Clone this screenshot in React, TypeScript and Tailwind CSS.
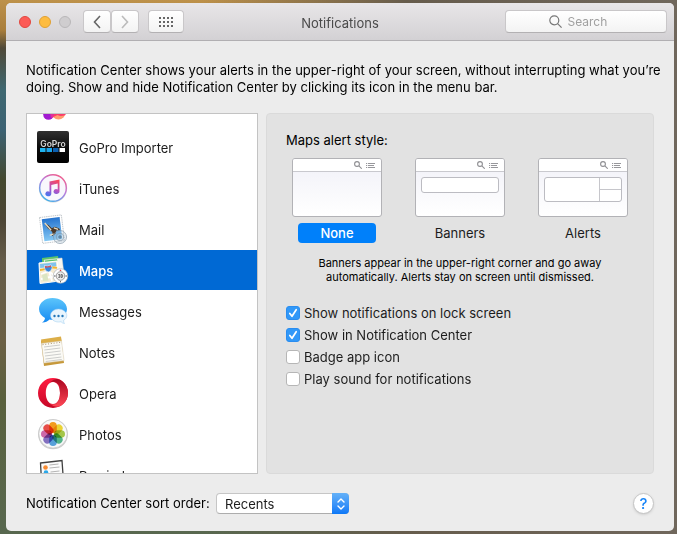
import { useState } from "react";
import type { ReactNode } from "react";

type AlertStyle = "None" | "Banners" | "Alerts";

function GameCenterIcon() {
  return (
    <svg viewBox="0 0 32 32" className="size-8 shrink-0" aria-hidden="true">
      <circle cx="11.500" cy="24.500" r="5.300" fill="#a21bd0" />
      <circle cx="21.500" cy="22.500" r="7" fill="#ff9d6e" />
      <path d="M14 17h14.500v8q-5 2-8 0l-5 2.500z" fill="#fb3d6b" />
      <path d="M13 18h4v7q-1 2-3 3-1-4-1-9" fill="#e0309a" />
    </svg>
  );
}

function GoProIcon() {
  return (
    <svg viewBox="0 0 32 32" className="size-8 shrink-0" aria-hidden="true">
      <defs>
        <linearGradient id="gp" x1="0" y1="0" x2="0" y2="1">
          <stop offset="0" stopColor="#303030" />
          <stop offset=".5" stopColor="#0d0d0d" />
          <stop offset="1" stopColor="#000" />
        </linearGradient>
      </defs>
      <rect width="32" height="32" rx="2" fill="url(#gp)" />
      <text x="16" y="16" fontSize="8.500" fontWeight="600" textAnchor="middle" fill="#d8d8d8" fontFamily="Inter, sans-serif">GoPro</text>
      <path d="M3 17h5.500v4H3z" fill="#1fb4f0" />
      <path d="M9.500 17H15v4H9.500z" fill="#1ba4ea" />
      <path d="M16 17h5.500v4H16z" fill="#0b5fb0" />
      <path d="M22.500 17H28v4h-5.500z" fill="#fff" />
    </svg>
  );
}

function ITunesIcon() {
  return (
    <svg viewBox="0 0 32 32" className="size-8 shrink-0" aria-hidden="true">
      <defs>
        <linearGradient id="itr" x1=".8" y1="0" x2=".2" y2="1">
          <stop offset="0" stopColor="#f75c86" />
          <stop offset=".45" stopColor="#b77be0" />
          <stop offset="1" stopColor="#35b5ea" />
        </linearGradient>
        <linearGradient id="itn" x1=".7" y1="0" x2=".3" y2="1">
          <stop offset="0" stopColor="#f9485c" />
          <stop offset=".55" stopColor="#b452c5" />
          <stop offset="1" stopColor="#4a75ee" />
        </linearGradient>
      </defs>
      <circle cx="16" cy="16.500" r="14.200" fill="#000" opacity=".12" />
      <circle cx="16" cy="16" r="13.300" fill="#f8f7fc" stroke="url(#itr)" strokeWidth="1.400" />
      <path d="M12.500 9.500 22.500 7.500V19.500a3 2.400 0 1 1-1.800-2.100V11.600l-6.400 1.300v8.900a3 2.400 0 1 1-1.800-2.100z" fill="url(#itn)" />
    </svg>
  );
}

function MailIcon() {
  return (
    <svg viewBox="0 0 32 32" className="size-8 shrink-0" aria-hidden="true">
      <defs>
        <linearGradient id="ml" x1="0" y1="0" x2="0" y2="1">
          <stop offset="0" stopColor="#2674ce" />
          <stop offset="1" stopColor="#83c8f5" />
        </linearGradient>
      </defs>
      <g transform="rotate(-7 16 16)">
        <rect x="4" y="3" width="22" height="26" fill="#fff" stroke="#b8bdc2" strokeWidth=".8" strokeDasharray="1.500 .7" />
        <rect x="6" y="5" width="18" height="22" fill="url(#ml)" />
        <path d="M8 9l4 2.500 3 3.500 3-1 4 2 1 2-4 0-1 3-4 2 1-4-4-4z" fill="#4b3928" />
        <path d="M8.500 9l3.500 5 2 3M17 15l4 2M12 22l4-1" stroke="#e9dcc2" strokeWidth="1.300" fill="none" />
      </g>
      <g fill="#a9c3d8" fillOpacity=".3" stroke="#8195a6" strokeWidth=".8" opacity=".85">
        <circle cx="23" cy="24" r="6.500" />
        <circle cx="23" cy="24" r="3.800" />
        <path d="M21 24h4M23 22v4" stroke="#3f566b" />
      </g>
    </svg>
  );
}

function MapsIcon() {
  return (
    <svg viewBox="0 0 32 32" className="size-8 shrink-0" aria-hidden="true">
      <path d="M5 4l16-2 1 8-17 2z" fill="#5cc46b" />
      <path d="M7 6l18-2 2.500 20-18 2z" fill="#f8f6ef" stroke="#dcd8cd" strokeWidth=".5" />
      <path d="M8 6.500l12-1.300.3 2.200L8 9z" fill="#5cc46b" />
      <path d="M2 9l18-2 2.500 20L3 29.500z" fill="#f4ebd3" stroke="#fff" strokeWidth="1" />
      <path d="M3 10l16-1.700.3 4L3.200 14z" fill="#7fc3ee" />
      <path d="M4 20l8-3 9 8M12 17l3 10M4 25l14-3" stroke="#fff" strokeWidth="1.800" fill="none" />
      <path d="M5 21l5-1.500 1.500 7L6 27z" fill="#dbe5c2" />
      <path d="M3 16c6-.5 11-4 17-2" stroke="#f4b32d" strokeWidth="1.800" fill="none" />
      <path d="M7.500 11.500l3 .6 3.500-1.300 1.200 3q-1 4.200-4 4.200-3.500-1-3.700-4z" fill="#3d88da" stroke="#fff" strokeWidth=".6" />
      <path d="M7.900 12l2.800.6 3-1.200.4 1.500-6 .9z" fill="#e84a4a" />
      <circle cx="23.500" cy="22" r="7.300" fill="#fff" stroke="#a5abb2" strokeWidth=".6" />
      <circle cx="23.500" cy="22" r="4.300" fill="#eee" stroke="#777" strokeWidth=".7" />
      <path d="M21.300 20.500h1.500v3h-1.500M21.600 22h1M24.200 20.500h1q1.200 1.500 0 3h-1z" stroke="#444" strokeWidth=".7" fill="none" />
      <path d="M22.500 17l1-1.700 1 1.700z" fill="#e83e3e" />
      <path d="M23.500 27.300v1M17.200 22h1.200M28.600 22h1.200" stroke="#333" />
    </svg>
  );
}

function MessagesIcon() {
  return (
    <svg viewBox="0 0 32 32" className="size-8 shrink-0" aria-hidden="true">
      <defs>
        <linearGradient id="msg" x1="0" y1="0" x2="0" y2="1">
          <stop offset="0" stopColor="#5cc5fb" />
          <stop offset="1" stopColor="#168af2" />
        </linearGradient>
      </defs>
      <path d="M15.500 3C8 3 2 7.800 2 14c0 4 2.400 7 6 9-.2 2-1.400 3.500-3 4.500 3 .2 5.500-1 7.500-3 9 1.300 17.500-4 17.500-10.500S23 3 15.500 3z" fill="url(#msg)" />
      <path d="M21.500 14c-4.500 0-8 3-8 6.500s3.500 6.500 8 6.500q1.300 0 2.500-.3 1.500 1.800 3.500 1.800-.9-1.200-1-3c2-1.200 3.300-3 3.300-5 0-3.500-3.800-6.500-8.300-6.500z" fill="#e9f5fd" stroke="#9acbef" strokeWidth=".5" />
      <g fill="#2276b8">
        <circle cx="17.500" cy="21" r="1.200" />
        <circle cx="21.500" cy="21" r="1.200" />
        <circle cx="25.500" cy="21" r="1.200" />
      </g>
    </svg>
  );
}

function NotesIcon() {
  return (
    <svg viewBox="0 0 32 32" className="size-8 shrink-0" aria-hidden="true">
      <path d="M4 5l20-3 3 25-20 3z" fill="#c6983a" />
      <path d="M4 3.500l20-3 .6 4.500L4.600 8z" fill="#dcae48" />
      <path d="M4.500 7.500 24.500 5l2.600 19.500-20 2.500z" fill="#fbfaf5" stroke="#d8d0bd" strokeWidth=".5" />
      <path d="M7 11l16-2M7.300 14l16-2M7.600 17l16-2M8 20l16-2M8.400 23l16-2M8.700 25.500l16-2" stroke="#b8b9b9" strokeWidth=".7" />
      <path d="M5.500 8.700 24 6.300" stroke="#947649" strokeDasharray="1 1.800" strokeWidth=".8" />
    </svg>
  );
}

function OperaIcon() {
  return (
    <svg viewBox="0 0 32 32" className="size-8 shrink-0" aria-hidden="true">
      <defs>
        <linearGradient id="op" x1="0" y1="0" x2="0" y2="1">
          <stop offset="0" stopColor="#ff1b40" />
          <stop offset="1" stopColor="#c60827" />
        </linearGradient>
        <linearGradient id="opr" x1="0" y1="0" x2="0" y2="1">
          <stop offset="0" stopColor="#aa0620" />
          <stop offset="1" stopColor="#ff4856" />
        </linearGradient>
      </defs>
      <path fillRule="evenodd" d="M16 1a15 15 0 1 1 0 30 15 15 0 1 1 0-30m0 4c-4.600 0-7.200 5-7.200 11S11.400 27 16 27s7-5 7-11S20.600 5 16 5" fill="url(#op)" />
      <path d="M13 5.300q7-6.200 13-.5a15 15 0 0 1 0 22.400q-6 5.500-13-.5 10 3 10-10.700T13 5.300z" fill="url(#opr)" />
    </svg>
  );
}

const petals = ["#f9a01e", "#f1d936", "#a9cb4b", "#54b98d", "#59a5df", "#8773c6", "#d26bae", "#ee504c"];

function PhotosIcon() {
  return (
    <svg viewBox="0 0 32 32" className="size-8 shrink-0" aria-hidden="true">
      <circle cx="16" cy="16.300" r="15" fill="#000" opacity=".2" />
      <circle cx="16" cy="15.800" r="14.300" fill="#f8f8f8" stroke="#c5c5c5" strokeWidth=".8" />
      {petals.map((color, i) => (
        <rect key={color} x="12.200" y="4" width="7.600" height="11" rx="3.800" fill={color} className="mix-blend-multiply" transform={`rotate(${i * 45} 16 16)`} />
      ))}
    </svg>
  );
}

function RemindersIcon() {
  return (
    <svg viewBox="0 0 32 32" className="size-8 shrink-0" aria-hidden="true">
      <path d="M3.500 4l21.500-2.500 2 28-22 1z" fill="#fbfbfb" stroke="#404040" strokeWidth="1.300" />
      <circle cx="8.500" cy="8.500" r="2.300" fill="#f78b32" />
      <circle cx="9" cy="13.500" r="2.300" fill="#2ba8e9" />
      <path d="M12.500 6l9-1M12.500 9l10-1M13.500 13l9-1" stroke="#b4b4b4" />
    </svg>
  );
}

const apps: { id: string; name?: string; icon: ReactNode }[] = [
  { id: "Game Center", icon: <GameCenterIcon /> },
  { id: "GoPro Importer", name: "GoPro Importer", icon: <GoProIcon /> },
  { id: "iTunes", name: "iTunes", icon: <ITunesIcon /> },
  { id: "Mail", name: "Mail", icon: <MailIcon /> },
  { id: "Maps", name: "Maps", icon: <MapsIcon /> },
  { id: "Messages", name: "Messages", icon: <MessagesIcon /> },
  { id: "Notes", name: "Notes", icon: <NotesIcon /> },
  { id: "Opera", name: "Opera", icon: <OperaIcon /> },
  { id: "Photos", name: "Photos", icon: <PhotosIcon /> },
  { id: "Reminders", name: "Reminders", icon: <RemindersIcon /> },
];

const toolButton =
  "flex h-[23px] items-center justify-center rounded-[4px] border border-[#c9c7c9] border-b-[#b3b1b3] bg-linear-to-b from-white to-[#f3f3f3]";

function TitleBar() {
  return (
    <header className="grid h-[38px] grid-cols-[1fr_auto_1fr] items-center border-b border-[#b1afb2] bg-linear-to-b from-[#e8e6e8] to-[#d3d1d4] px-[7px]">
      <div className="flex items-center pl-1.5">
        <div className="flex gap-2">
          <button type="button" aria-label="Close" className="size-3 rounded-full border border-[#e2463f] bg-[#fc5b57]" />
          <button type="button" aria-label="Minimize" className="size-3 rounded-full border border-[#e0a033] bg-[#fdbc40]" />
          <button type="button" aria-label="Zoom" disabled className="size-3 rounded-full border border-[#b9b7b9] bg-[#cfcdcf]" />
        </div>
        <div className="ml-3 flex">
          <button type="button" aria-label="Back" className={`${toolButton} w-7`}>
            <svg viewBox="0 0 8 14" className="h-3.5 w-2" fill="none" stroke="#666" strokeWidth="1.600" aria-hidden="true">
              <path d="M7 1 1.500 7 7 13" />
            </svg>
          </button>
          <button type="button" aria-label="Forward" disabled className={`${toolButton} w-7`}>
            <svg viewBox="0 0 8 14" className="h-3.5 w-2" fill="none" stroke="#bbb" strokeWidth="1.600" aria-hidden="true">
              <path d="M1 1l5.500 6L1 13" />
            </svg>
          </button>
        </div>
        <button type="button" aria-label="Show all" className={`${toolButton} ml-[9px] w-9`}>
          <svg viewBox="0 0 14 10" className="h-2.5 w-3.5" fill="#666" aria-hidden="true">
            {[0, 4, 8].map((y) => [0, 4, 8, 12].map((x) => <rect key={`${x}-${y}`} x={x} y={y} width="2" height="2" />))}
          </svg>
        </button>
      </div>
      <h1 className="pt-0.5 text-[13px] leading-4 text-[#4a4a4a]">Notifications</h1>
      <label className={`${toolButton} w-[162px] gap-1.5 justify-self-end`}>
        <svg viewBox="0 0 13 13" className="size-[13px]" fill="none" stroke="#777" strokeWidth="1.200" aria-hidden="true">
          <circle cx="5.300" cy="5.300" r="4.500" />
          <path d="M8.600 8.600l4 4" />
        </svg>
        <input type="text" aria-label="Search" placeholder="Search" className="w-14 bg-transparent text-xs outline-none placeholder:text-[#a0a0a0]" />
      </label>
    </header>
  );
}

function StylePreview({ kind }: { kind: AlertStyle }) {
  return (
    <span className="block h-[59px] w-[90px] overflow-hidden rounded-[3px] border border-[#b2b2b6] bg-linear-to-b from-[#f1f1f8] to-white">
      <span className="flex h-[13px] items-center justify-end gap-1 border-b border-[#c9c9ce] bg-white pr-1.5">
        <svg viewBox="0 0 8 8" className="size-2" fill="none" stroke="#8e8e92" strokeWidth="1.100" aria-hidden="true">
          <circle cx="3" cy="3" r="2.400" />
          <path d="M4.900 4.900 7.700 7.700" />
        </svg>
        <svg viewBox="0 0 9 7" className="h-[7px] w-[9px]" fill="none" stroke="#97979b" aria-hidden="true">
          <path d="M0 1.500h1.200M2 1.500h7M0 3.500h1.200M2 3.500h6M0 5.500h1.200M2 5.500h7" />
        </svg>
      </span>
      {kind === "Banners" && <span className="mx-[5px] mt-[5px] block h-4 rounded-[3px] border border-[#bcbcc2] bg-white" />}
      {kind === "Alerts" && (
        <span className="mx-[5px] mt-[5px] flex h-[25px] rounded-[3px] border border-[#bcbcc2] bg-white">
          <span className="flex-1" />
          <span className="flex w-[22px] flex-col border-l border-[#c6c6cb]">
            <span className="flex-1 border-b border-[#c6c6cb]" />
            <span className="flex-1" />
          </span>
        </span>
      )}
    </span>
  );
}

function CheckRow({ label, initial }: { label: string; initial: boolean }) {
  const [checked, setChecked] = useState(initial);
  return (
    <label className="flex h-[22px] items-center gap-1">
      <span className="grid size-3.5">
        <input
          type="checkbox"
          checked={checked}
          onChange={(e) => setChecked(e.target.checked)}
          className="col-start-1 row-start-1 size-3.5 appearance-none rounded-[3px] border border-[#b6b6b6] bg-white checked:border-[#2a8df0] checked:bg-[#3198f8]"
        />
        {checked && (
          <svg viewBox="0 0 14 14" className="pointer-events-none col-start-1 row-start-1 size-3.5" fill="none" stroke="#fff" strokeWidth="1.700" strokeLinecap="round" strokeLinejoin="round" aria-hidden="true">
            <path d="M3.800 7.500 6 10.300 10.200 3.700" />
          </svg>
        )}
      </span>
      {label}
    </label>
  );
}

const alertStyles: AlertStyle[] = ["None", "Banners", "Alerts"];

export default function App() {
  const [selectedApp, setSelectedApp] = useState("Maps");
  const [alertStyle, setAlertStyle] = useState<AlertStyle>("None");

  return (
    <div className="flex min-h-screen flex-col bg-[linear-gradient(to_right,transparent_30%,#665c4c_60%,#70675c_100%),linear-gradient(to_bottom,#bd914a_0px,#a97e3c_30px,#4f4938_48px,#3f6871_90px,#3c6273_130px,#45492f_180px,#4c4535_220px,#655c49_260px,#6c6045_340px,#59603d_400px,#58684f_100%)] pt-[3px] pr-[3px] pb-[3px] pl-1.5 font-['Inter','Liberation_Sans',sans-serif] text-[13px] leading-[17px] text-[#1c1c1c]">
      <main className="flex flex-1 flex-col overflow-hidden rounded-[5px] bg-[#ececec]">
        <TitleBar />
        <p className="pt-[21px] pl-5 text-black">
          Notification Center shows your alerts in the upper-right of your screen, without interrupting what you’re
          <br />
          doing. Show and hide Notification Center by clicking its icon in the menu bar.
        </p>

        <div className="mx-5 mt-[17px] flex h-[361px] gap-2">
          <nav aria-label="Applications" className="w-[232px] shrink-0 overflow-hidden border border-[#c3c3c3] bg-white">
            <ul className="-mt-7 flex flex-col gap-px">
              {apps.map(({ id, name, icon }) => (
                <li key={id}>
                  <button
                    type="button"
                    aria-label={id}
                    onClick={() => setSelectedApp(id)}
                    className={`flex h-10 w-full items-center gap-2.5 pl-2.5 text-left ${id === selectedApp ? "bg-[#0069d4] font-medium text-white" : ""}`}
                  >
                    {icon}
                    {name && <span className="pt-[3px]">{name}</span>}
                  </button>
                </li>
              ))}
            </ul>
          </nav>

          <section className="flex-1 rounded-[4px] border border-[#dadada] bg-[#e2e2e2] px-[19px] pt-[18px]">
            <h2 className="text-black">Maps alert style:</h2>
            <div className="mt-[9px] flex gap-[33px] pl-1.5">
              {alertStyles.map((style) => (
                <button key={style} type="button" aria-pressed={style === alertStyle} onClick={() => setAlertStyle(style)} className="flex flex-col items-center gap-1.5">
                  <StylePreview kind={style} />
                  <span className={`h-5 w-[78px] rounded-[4px] leading-5 ${style === alertStyle ? "bg-[#0080fa] font-medium text-white" : ""}`}>
                    {style}
                  </span>
                </button>
              ))}
            </div>
            <p className="mt-[13px] text-center text-[11px] leading-[14px] text-black">
              Banners appear in the upper-right corner and go away
              <br />
              automatically. Alerts stay on screen until dismissed.
            </p>
            <div className="mt-[18px] flex flex-col items-start">
              <CheckRow label="Show notifications on lock screen" initial={true} />
              <CheckRow label="Show in Notification Center" initial={true} />
              <CheckRow label="Badge app icon" initial={false} />
              <CheckRow label="Play sound for notifications" initial={false} />
            </div>
          </section>
        </div>

        <footer className="flex items-center px-5 pt-[19px] pb-[17px]">
          <label htmlFor="sort-order" className="w-[190px] whitespace-nowrap text-black">
            Notification Center sort order:
          </label>
          <span className="grid w-[133px]">
            <select id="sort-order" defaultValue="Recents" className="col-start-1 row-start-1 h-[21px] w-full appearance-none rounded-[4px] border border-[#c6c6c6] border-b-[#adadad] bg-white pl-2 text-[13px] leading-4">
              <option>Recents</option>
              <option>Recents by App</option>
              <option>Manually</option>
            </select>
            <span className="pointer-events-none col-start-1 row-start-1 flex h-[21px] w-[17px] items-center justify-center justify-self-end rounded-r-[4px] bg-linear-to-b from-[#63b1f8] to-[#0a78f7]">
              <svg viewBox="0 0 8 12" className="h-3 w-2" fill="none" stroke="#fff" strokeWidth="1.400" strokeLinecap="round" strokeLinejoin="round" aria-hidden="true">
                <path d="M1 4l3-3 3 3M1 8l3 3 3-3" />
              </svg>
            </span>
          </span>
          <button type="button" aria-label="Help" className="ml-auto size-[21px] rounded-full border border-[#c4c4c4] bg-white text-[15px] leading-4 font-medium text-[#1684f8] shadow-sm">
            ?
          </button>
        </footer>
      </main>
    </div>
  );
}
